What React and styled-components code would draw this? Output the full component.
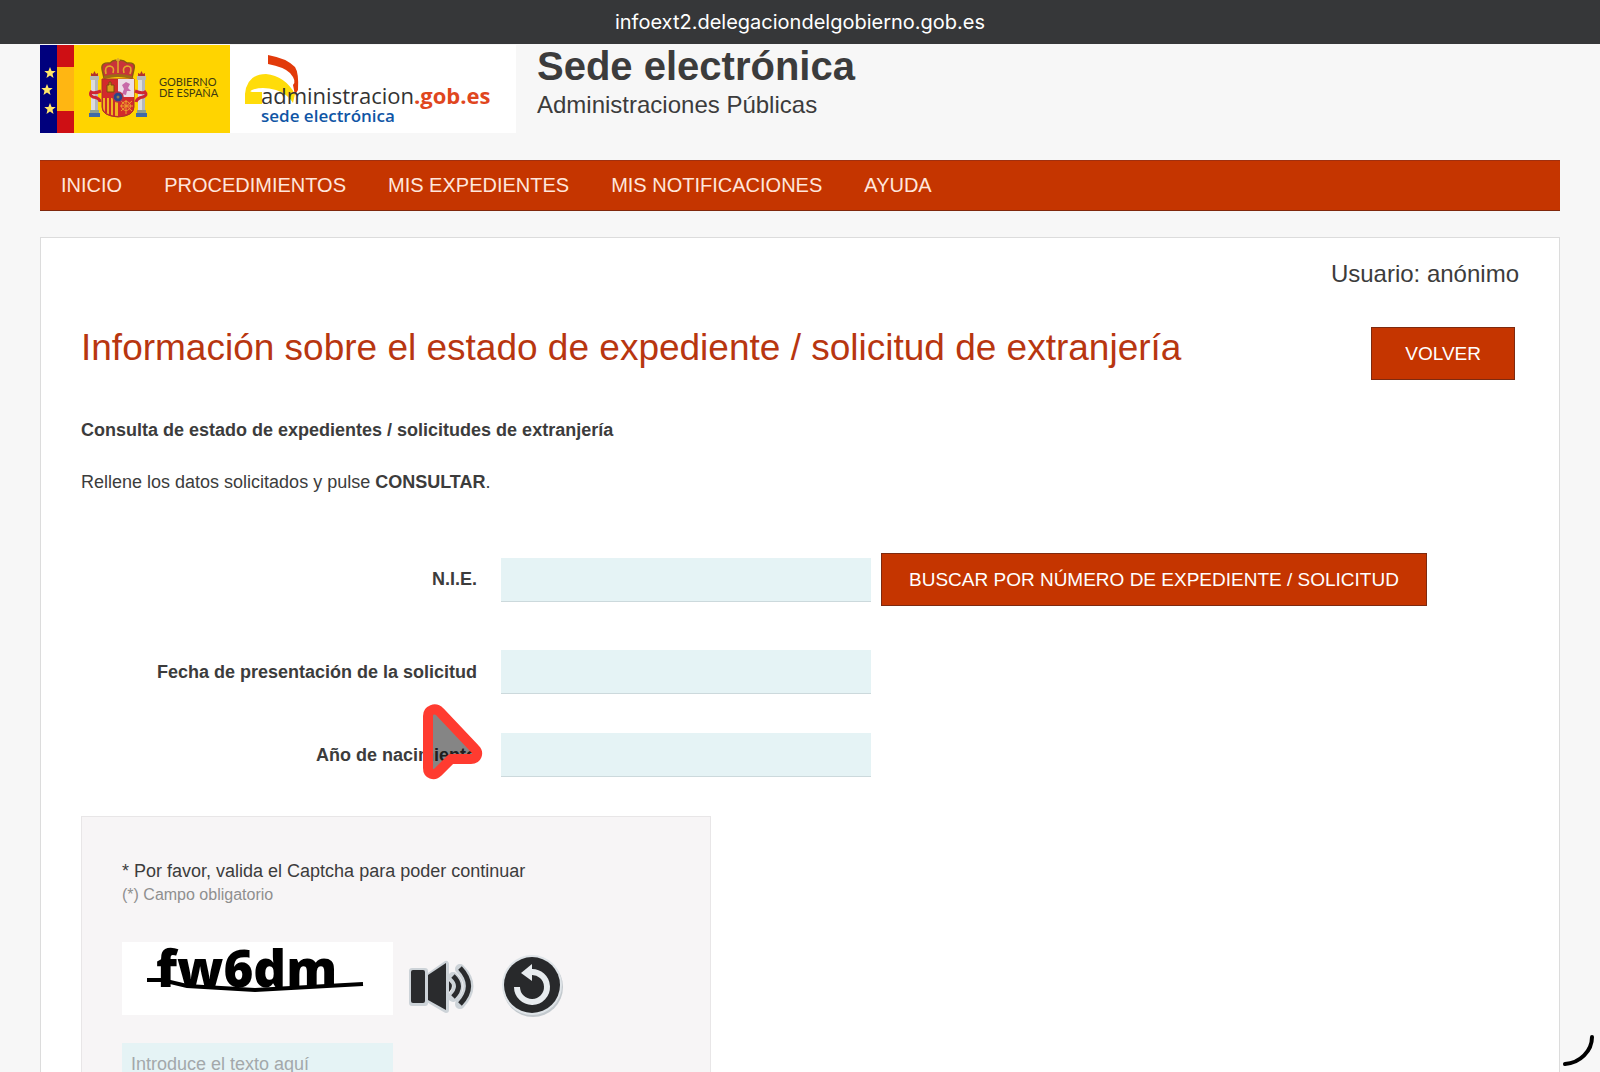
import React from 'react';
import { useState } from 'react';
import styled, { createGlobalStyle } from "styled-components";

const menu = ["INICIO", "PROCEDIMIENTOS", "MIS EXPEDIENTES", "MIS NOTIFICACIONES", "AYUDA"];

const STAR = "M0,-6 L1.6,-2 L5.7,-1.9 L2.5,0.8 L3.5,4.9 L0,2.6 L-3.5,4.9 L-2.5,0.8 L-5.7,-1.9 L-1.6,-2 Z";

const Pillar = ({ x }) => (
    <g transform={`translate(${x} 0)`}>
        <rect x="1" y="31" width="9" height="4" fill="#b9b9b4" />
        <path d="M2 31 L2 28 L4 29 L5.500 26 L7 29 L9 28 L9 31 Z" fill="#b5322a" />
        <rect x="2" y="35" width="7" height="31" fill="#dcdcdc" />
        <rect x="6" y="35" width="3" height="31" fill="#b4b8bd" />
        <rect x="1" y="65" width="9" height="3" fill="#8fa08f" />
        <rect x="0" y="68" width="11" height="4" fill="#3f6aa8" />
    </g>
);

const GobiernoLogo = () => (
    <Logo viewBox="0 0 476 88" role="img" aria-label="Gobierno de España, administracion.gob.es">
        <rect width="476" height="88" fill="#fff" />
        <rect width="190" height="88" fill="#ffd400" />
        <rect width="17" height="88" fill="#00007d" />
        <rect x="17" width="17" height="88" fill="#ce0f14" />
        <rect x="17" y="22" width="17" height="44" fill="#ffb612" />
        <g fill="#ffe76a">
            <path d={STAR} transform="translate(10 28)" />
            <path d={STAR} transform="translate(7 45)" />
            <path d={STAR} transform="translate(10 64)" />
        </g>

        {/* escudo */}
        <Pillar x={49} />
        <Pillar x={96} />
        <path d="M61 46 Q54 49 51 47 Q49 50 53 52 Q60 53 60 57 M95 46 Q102 49 105 47 Q108 50 103 52 Q97 53 96 57" fill="none" stroke="#cf2531" strokeWidth="3" />
        <path d="M64 33 L62 24 Q61 17 70 18 Q74 14 78 16 Q82 14 87 18 Q96 17 94 24 L92 33 Q78 29 64 33 Z" fill="#c9333a" stroke="#8a5a12" strokeWidth="1.500" />
        <path d="M66 29 Q64 21 70 21 Q75 22 73 28 M90 29 Q93 21 87 21 Q82 22 84 28 M78 28 L78 13 M76 15 L80 15" fill="none" stroke="#e0a92a" strokeWidth="1.600" />
        <path d="M64 31 Q78 27 92 31 L92 34 Q78 30 64 34 Z" fill="#9d6a15" />
        <path d="M62 34 H94 V62 Q94 71 78 72 Q62 71 62 62 Z" fill="#d32a2c" stroke="#a8342a" />
        <path d="M78 34 H94 V52 H78 Z" fill="#ecdde6" />
        <path d="M67 47 V40 H69 V37 H71 V40 H74 V47 Z" fill="#d8a419" stroke="#7a4b10" />
        <path d="M82 49 L84 44 L82 40 L86 37 L90 39 L88 43 L91 46 L87 46 L86 50 Z" fill="#c86aa8" />
        <path d="M63 53 H78 V71 Q63 70 63 62 Z" fill="#f0b51e" />
        <path d="M66 53 V68 M70 53 V70 M74 53 V71" stroke="#c92a2a" strokeWidth="2" />
        <path d="M81 56 L92 66 M92 56 L81 66 M86 55 V69 M80 61 H93" stroke="#eda02c" />
        <circle cx="86" cy="61" r="4.500" fill="none" stroke="#eda02c" />
        <circle cx="78" cy="52" r="5" fill="#28468c" stroke="#b53345" strokeWidth="1.500" />
        <circle cx="78" cy="52" r="1.500" fill="#8c8050" />

        <Lema x="119" y="41">GOBIERNO</Lema>
        <Lema x="119" y="52">DE ESPAÑA</Lema>

        <path d="M205 59 V49 Q207 29 226 29 Q245 31 255 49 L253 58 Q248 49 236 45 Q222 41 212 45 Q208 47 214 47 H222 V59 Z" fill="#ffdc0a" />
        <path d="M228 10 Q246 13 255 22 Q259 28 258 45 L255 50 L253 40 Q257 36 250 28 Q244 22 228 19 Z" fill="#e23a0a" />
        <LogoText x="221" y="59" $size={22} $weight={500} fill="#333">
            administracion<tspan fill="#e0461e" fontWeight="700">.gob.es</tspan>
        </LogoText>
        <LogoText x="221" y="77" $size={17} $weight={600} fill="#0f55a5">sede electrónica</LogoText>
    </Logo>
);

const SpeakerIcon = () => (
    <svg width="69" height="64" viewBox="0 0 69 64" aria-hidden="true">
        <g fill="none" stroke="#cdd3d8" strokeLinejoin="round" strokeLinecap="round">
            <path d="M4 17 H17 V49 H4 Z M21 22 L38 10 V56 L21 46 Z" strokeWidth="6" />
            <path d="M45 23 Q54 32 45 43 M52 15 Q69 32 52 50" strokeWidth="10" />
        </g>
        <g fill="#2a2b2d">
            <rect x="3" y="16" width="14" height="33" rx="2" />
            <path d="M20 21 L38 9 V56 L20 46 Z" />
            <path d="M41 27 Q47 32 41 38 Z" />
        </g>
        <path d="M45 22 Q56 32 45 43 M52 14 Q69 32 52 50" fill="none" stroke="#2a2b2d" strokeWidth="5" />
    </svg>
);

const ReloadIcon = () => (
    <svg width="64" height="64" viewBox="0 0 64 64" aria-hidden="true">
        <circle cx="32" cy="33" r="30" fill="#c3c9ce" />
        <circle cx="31" cy="31" r="30" fill="#dfe4e8" />
        <circle cx="31" cy="31" r="28" fill="#28292b" />
        <path d="M16 33 A15 15 0 1 0 30 18" fill="none" stroke="#e8ecef" strokeWidth="6" />
        <path d="M20 19 L31 10 V27 Z" fill="#e8ecef" />
    </svg>
);

const App = () => {
    const [form, setForm] = useState({ nie: "", fecha: "", nacimiento: "", captcha: "" });

    const onChange = (e) => {
        setForm({ ...form, [e.target.name]: e.target.value });
    };

    return (
     <>
     <GlobalStyle/>
     <Screen>
       <UrlBar>infoext2.delegaciondelgobierno.gob.es</UrlBar>
       <Page>
         <Header>
            <GobiernoLogo/>
            <div>
                <SiteName>Sede electrónica</SiteName>
                <SiteDesc>Administraciones Públicas</SiteDesc>
            </div>
         </Header>
         <Nav>
            {menu.map((item) => (
                <NavLink key={item} href="#">{item}</NavLink>
            ))}
         </Nav>
         <Card>
            <User>Usuario: anónimo</User>
            <TitleRow>
                <Title>Información sobre el estado de expediente / solicitud de extranjería</Title>
                <BackBut type="button">VOLVER</BackBut>
            </TitleRow>
            <Subtitle>Consulta de estado de expedientes / solicitudes de extranjería</Subtitle>
            <Intro>Rellene los datos solicitados y pulse <b>CONSULTAR</b>.</Intro>
            <form onSubmit={(e) => e.preventDefault()}>
                <Row $space={44}>
                    <Label htmlFor="nie">N.I.E.</Label>
                    <Input id="nie" name="nie" value={form.nie} onChange={onChange}/>
                    <SearchBut type="button">BUSCAR POR NÚMERO DE EXPEDIENTE / SOLICITUD</SearchBut>
                </Row>
                <Row>
                    <Label htmlFor="fecha">Fecha de presentación de la solicitud</Label>
                    <Input id="fecha" name="fecha" value={form.fecha} onChange={onChange}/>
                </Row>
                <Row>
                    <Label htmlFor="nacimiento">Año de nacimiento</Label>
                    <Input id="nacimiento" name="nacimiento" value={form.nacimiento} onChange={onChange}/>
                </Row>
                <CaptchaBox>
                    <CaptchaLabel htmlFor="captcha">* Por favor, valida el Captcha para poder continuar</CaptchaLabel>
                    <Required>(*) Campo obligatorio</Required>
                    <CaptchaRow>
                        <CaptchaImg viewBox="0 0 271 73" role="img" aria-label="Captcha">
                            <rect width="271" height="73" fill="#fff" />
                            <text x="34" y="45">fw6dm</text>
                            <path d="M25 38 H40 L65 44 L133 48 L241 42" fill="none" stroke="#000" strokeWidth="4" />
                        </CaptchaImg>
                        <IconBut type="button" aria-label="Escuchar"><SpeakerIcon/></IconBut>
                        <IconBut type="button" aria-label="Recargar"><ReloadIcon/></IconBut>
                    </CaptchaRow>
                    <CaptchaInput id="captcha" name="captcha" placeholder="Introduce el texto aquí" value={form.captcha} onChange={onChange}/>
                </CaptchaBox>
            </form>
         </Card>
       </Page>
       <Pointer viewBox="0 0 60 76" aria-hidden="true">
          <path d="M5 12 V64 C5 70 11 72 15 68 L28 55 H48 C54 55 56 49 52 45 L17 8 C12 3 5 6 5 12 Z" fill="rgba(0,0,0,0.48)" />
          <path d="M5 12 V64 C5 70 11 72 15 68 L28 55 H48 C54 55 56 49 52 45 L17 8 C12 3 5 6 5 12 Z" fill="none" stroke="#ff3b30" strokeWidth="10" strokeLinejoin="round" />
       </Pointer>
       <Corner viewBox="0 0 32 32" aria-hidden="true">
          <path d="M2 29 C17 28 29 16 29 2" fill="none" stroke="#000" strokeWidth="4" strokeLinecap="round" />
       </Corner>
     </Screen>
     </>
    );
};

export default App;

const GlobalStyle = createGlobalStyle`
    *{
        box-sizing:border-box;
    }
    body{
        margin:0;
        background-color:#f7f7f7;
        color:#3c3c3c;
        font-family:"Liberation Sans", Arial, sans-serif;
    }
`;
const Screen = styled.div`
    display:flex;
    flex-direction:column;
    height:100vh;
    overflow:hidden;
`;
const UrlBar = styled.div`
    flex-shrink:0;
    height:44px;
    line-height:44px;
    text-align:center;
    font-family:Inter, sans-serif;
    font-size:20px;
    color:#fff;
    background-color:#363739;
`;
const Page = styled.main`
    flex:1;
    min-height:0;
    overflow:hidden;
    padding:1px 40px 0;
`;
const Header = styled.header`
    display:flex;
    gap:21px;
    margin-bottom:27px;
`;
const Logo = styled.svg`
    width:476px;
    height:88px;
    flex-shrink:0;
`;
const LogoText = styled.text`
    font-family:"Open Sans", sans-serif;
    font-size:${(props) => props.$size}px;
    font-weight:${(props) => props.$weight || 400};
`;
const Lema = styled.text`
    font-family:Lato, sans-serif;
    font-size:11px;
    fill:#3d3a12;
`;
const SiteName = styled.div`
    font-size:40px;
    line-height:42px;
    font-weight:700;
`;
const SiteDesc = styled.div`
    font-size:24px;
    line-height:36px;
`;
const Nav = styled.nav`
    display:flex;
    height:51px;
    background-color:#c53500;
    border-top:1px solid #a03010;
    border-bottom:1px solid #80280c;
    margin-bottom:26px;
`;
const NavLink = styled.a`
    padding:0 21px;
    font-size:20px;
    line-height:49px;
    color:#ffe6dc;
    text-decoration:none;
`;
const Card = styled.section`
    padding:22px 40px 40px;
    background-color:#fff;
    border:1px solid #dcdcdc;
`;
const User = styled.div`
    text-align:right;
    font-size:24px;
    line-height:28px;
    margin-bottom:39px;
`;
const TitleRow = styled.div`
    display:flex;
    justify-content:space-between;
    align-items:flex-start;
    margin-bottom:38px;
`;
const Title = styled.h1`
    margin:0;
    font-size:37px;
    line-height:42px;
    font-weight:400;
    color:#b83610;
`;
const Button = styled.button`
    height:53px;
    border:1px solid #7d2a10;
    background-color:#c53500;
    color:#fff;
    font-family:inherit;
    font-size:19px;
    white-space:nowrap;
    cursor:pointer;
`;
const BackBut = styled(Button)`
    padding:0 33px;
    margin-right:4px;
`;
const SearchBut = styled(Button)`
    padding:0 27px;
    margin-left:10px;
`;
const Subtitle = styled.p`
    margin:0 0 28px;
    font-size:18px;
    line-height:24px;
    font-weight:700;
`;
const Intro = styled.p`
    margin:0 0 59px;
    font-size:18px;
    line-height:24px;
`;
const Row = styled.div`
    display:grid;
    grid-template-columns:minmax(0, 420px) minmax(0, 370px) auto;
    justify-content:start;
    align-items:center;
    margin-bottom:${(props) => props.$space || 39}px;
`;
const Label = styled.label`
    padding-right:24px;
    text-align:right;
    font-size:18px;
    font-weight:700;
`;
const Input = styled.input`
    width:100%;
    height:44px;
    padding:0 9px;
    border:0;
    border-bottom:1px solid #ccd9dc;
    border-radius:0;
    background-color:#e5f3f5;
    color:#3c3c3c;
    font-family:inherit;
    font-size:18px;
`;
const CaptchaBox = styled.div`
    width:630px;
    max-width:100%;
    padding:40px;
    background-color:#f7f5f6;
    border:1px solid #e8e6e7;
`;
const CaptchaLabel = styled.label`
    display:block;
    font-size:18px;
    line-height:28px;
`;
const Required = styled.div`
    font-size:16px;
    line-height:20px;
    color:#8f8f8f;
`;
const CaptchaRow = styled.div`
    display:flex;
    align-items:flex-start;
    margin:37px 0 25px;
`;
const CaptchaImg = styled.svg`
    width:271px;
    height:73px;
    text{
        font-family:"Open Sans", sans-serif;
        font-size:51px;
        font-weight:800;
    }
`;
const IconBut = styled.button`
    display:block;
    padding:0;
    margin:12px 9px 0 15px;
    border:0;
    background:none;
    cursor:pointer;
    svg{
        display:block;
    }
`;
const CaptchaInput = styled(Input)`
    display:block;
    width:271px;
    &::placeholder{
        color:#a3a8aa;
        opacity:1;
    }
`;
const Pointer = styled.svg`
    position:fixed;
    left:423px;
    top:704px;
    width:60px;
    height:76px;
    pointer-events:none;
`;
const Corner = styled.svg`
    position:fixed;
    right:5px;
    bottom:5px;
    width:32px;
    height:32px;
    pointer-events:none;
`;
